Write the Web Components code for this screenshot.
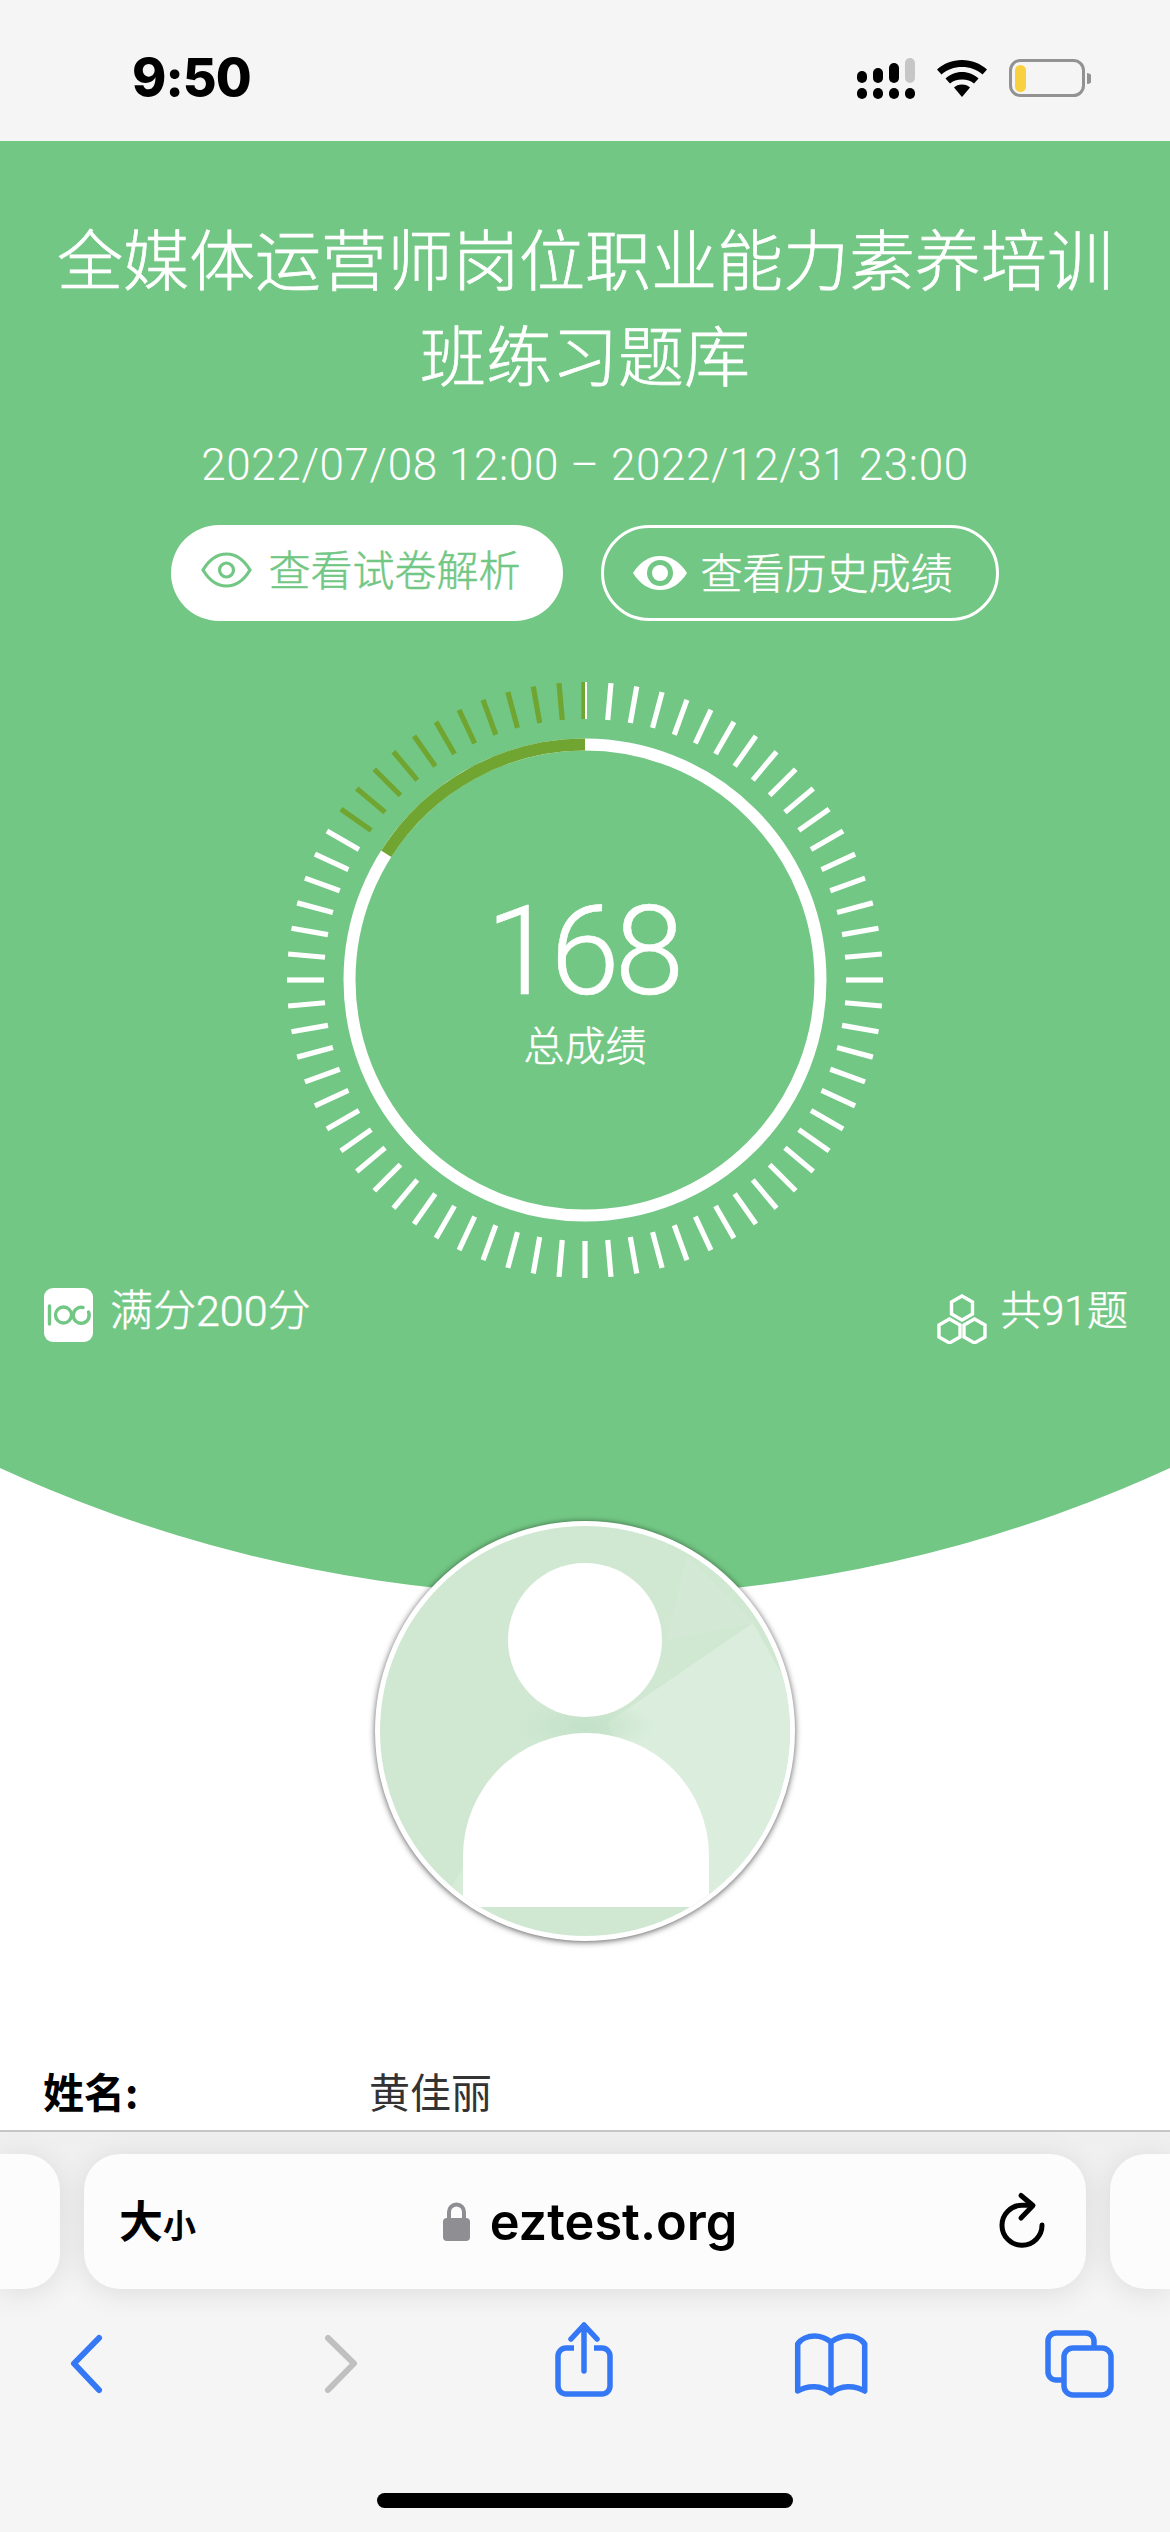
<!DOCTYPE html>
<html lang="zh">
<head>
<meta charset="utf-8">
<title>成绩</title>
<style>
  html, body { margin: 0; padding: 0; background: #fff; }
  body { font-family: "Noto Sans CJK SC", "Noto Sans", sans-serif; width: 1170px; height: 2532px; overflow: hidden; }
</style>
</head>
<body>
<exam-page>
  <status-bar time="9:50"></status-bar>
  <result-hero date="2022/07/08 12:00 – 2022/12/31 23:00">
    <span slot="title">全媒体运营师岗位职业能力素养培训班练习题库</span>
    <pill-button slot="actions" variant="solid">查看试卷解析</pill-button>
    <pill-button slot="actions" variant="outline">查看历史成绩</pill-button>
    <score-gauge slot="gauge" score="168" total="200" label="总成绩"></score-gauge>
    <stat-item slot="stats" icon="full">满分200分</stat-item>
    <stat-item slot="stats" icon="count">共91题</stat-item>
  </result-hero>
  <user-avatar></user-avatar>
  <info-list>
    <info-row label="姓名:">黄佳丽</info-row>
  </info-list>
  <safari-bar host-name="eztest.org"></safari-bar>
</exam-page>

<script>
class ExamPage extends HTMLElement {
  constructor() {
    super();
    this.attachShadow({ mode: 'open' });
  }
  connectedCallback() {
    this.shadowRoot.innerHTML = `
      <style>
        :host { display: flex; flex-direction: column; width: 1170px; height: 2532px; overflow: hidden; background: #fff; }
      </style>
      <slot></slot>`;
  }
}

class StatusBar extends HTMLElement {
  constructor() {
    super();
    this.attachShadow({ mode: 'open' });
  }
  connectedCallback() {
    this.shadowRoot.innerHTML = `
      <style>
        :host { display: flex; flex: none; box-sizing: border-box; height: 141px; padding: 36px 79px 21px 132px; align-items: center; background: #f5f5f5; }
        .time { font: 800 52px/84px Inter, "Liberation Sans", sans-serif; color: #000; letter-spacing: -1px; }
        .icons { display: flex; align-items: center; gap: 22px; margin-left: auto; }
        svg { display: block; }
      </style>
      <div class="time">${this.getAttribute('time')}</div>
      <div class="icons">
        <svg width="58" height="41" viewBox="0 0 58 41">
          <rect x="0" y="13" width="10" height="12" rx="5"/><rect x="16" y="10" width="10" height="15" rx="5"/>
          <rect x="32" y="5" width="10" height="20" rx="5"/><rect x="48" y="0" width="10" height="25" rx="5" fill="#c6c6c6"/>
          <rect x="0" y="30" width="10" height="11" rx="5"/><rect x="16" y="30" width="10" height="11" rx="5"/>
          <rect x="32" y="30" width="10" height="11" rx="5"/><rect x="48" y="30" width="10" height="11" rx="5"/>
        </svg>
        <svg width="50" height="37" viewBox="0 0 50 37">
          <path d="M25 0C15 0 7 3.5 0 9.5L4.5 14.5C10 9.5 17 7 25 7C33 7 40 9.5 45.5 14.5L50 9.5C43 3.5 35 0 25 0Z"/>
          <path d="M25 12C18.5 12 13 14.5 8.5 18.5L13 23.5C16 21 20 19.5 25 19.5C30 19.5 34 21 37 23.5L41.5 18.5C37 14.5 31.5 12 25 12Z"/>
          <path d="M25 24.5C21.5 24.5 19 25.5 17 27.5L25 37L33 27.5C31 25.5 28.5 24.5 25 24.5Z"/>
        </svg>
        <svg width="82" height="38" viewBox="0 0 82 38">
          <rect x="1.5" y="1.5" width="73" height="35" rx="10" fill="none" stroke="#929292" stroke-width="3"/>
          <rect x="6" y="6" width="11" height="27" rx="5.5" fill="#f9d040"/>
          <path d="M78 14a5.5 5.5 0 0 1 0 11Z" fill="#929292"/>
        </svg>
      </div>`;
  }
}

class ResultHero extends HTMLElement {
  constructor() {
    super();
    this.attachShadow({ mode: 'open' });
  }
  connectedCallback() {
    this.shadowRoot.innerHTML = `
      <style>
        :host { display: flex; flex: none; flex-direction: column; align-items: center; box-sizing: border-box; height: 1455px; padding-top: 67px; background: #73c784; color: #fff; clip-path: circle(1400px at 50% 55px); }
        .title { width: 1060px; font-size: 66px; line-height: 96px; font-weight: 300; -webkit-text-stroke: .7px #fff; text-align: center; }
        .date { margin-top: 35px; font: 300 44px/60px Roboto, "Liberation Sans", sans-serif; letter-spacing: .62px; white-space: nowrap; }
        .actions { display: flex; gap: 38px; margin-top: 30px; }
        .gauge { margin-top: 59px; }
        .stats { display: flex; justify-content: space-between; box-sizing: border-box; width: 100%; margin-top: 8px; padding: 0 42px 0 44px; }
      </style>
      <div class="title"><slot name="title"></slot></div>
      <div class="date">${this.getAttribute('date')}</div>
      <div class="actions"><slot name="actions"></slot></div>
      <div class="gauge"><slot name="gauge"></slot></div>
      <div class="stats"><slot name="stats"></slot></div>`;
  }
}

class PillButton extends HTMLElement {
  constructor() {
    super();
    this.attachShadow({ mode: 'open' });
  }
  connectedCallback() {
    const solid = this.getAttribute('variant') === 'solid';
    const icon = solid
      ? `<svg width="51" height="36" viewBox="0 0 51 36" fill="none" stroke="#73c784" stroke-width="3.2">
           <path d="M2 18C8 8 16 2 25.5 2S43 8 49 18C43 28 35 34 25.5 34S8 28 2 18Z"/>
           <circle cx="25.5" cy="18" r="7"/>
         </svg>`
      : `<svg width="54" height="34" viewBox="0 0 54 34">
           <path d="M0 17C7 6 16 0 27 0S47 6 54 17C47 28 38 34 27 34S7 28 0 17Z" fill="#fff"/>
           <circle cx="27" cy="17" r="13" fill="#73c784"/>
           <circle cx="27" cy="17" r="8" fill="#fff"/>
         </svg>`;
    this.shadowRoot.innerHTML = `
      <style>
        :host { display: flex; align-items: center; box-sizing: border-box; height: 96px; border-radius: 48px; font-size: 42px; line-height: 60px; font-weight: 300; white-space: nowrap; }
        :host([variant="solid"]) { padding: 0 42px 0 30px; gap: 16px; background: #fff; color: #73c784; -webkit-text-stroke: .5px #73c784; }
        :host([variant="outline"]) { padding: 0 43px 0 29px; gap: 14px; border: 3px solid #fff; color: #fff; -webkit-text-stroke: .5px #fff; }
        :host([variant="solid"]) .text { margin-top: -11px; }
        :host([variant="outline"]) .text { margin-top: -5px; }
        :host([variant="solid"]) svg { margin-top: -6px; }
        svg { display: block; flex: none; }
      </style>
      ${icon}<div class="text"><slot></slot></div>`;
  }
}

class ScoreGauge extends HTMLElement {
  constructor() {
    super();
    this.attachShadow({ mode: 'open' });
  }
  connectedCallback() {
    const score = Number(this.getAttribute('score'));
    const total = Number(this.getAttribute('total'));
    const lost = (total - score) / total * 360;
    const dark = '#6fa530';
    const rad = lost * Math.PI / 180;
    const r = 235.5;
    const endX = (-r * Math.sin(rad)).toFixed(1);
    const endY = (-r * Math.cos(rad)).toFixed(1);

    // 72 ticks, the ones inside the lost share run dark, counter-clockwise from the top
    let ticks = '';
    for (let i = 1; i < 72; i++) {
      const deg = i * 5;
      const isDark = deg > 360 - lost;
      ticks += `<rect x="-2.6" y="-298" width="5.2" height="37" fill="${isDark ? dark : '#fff'}" transform="rotate(${deg})"/>`;
    }

    this.shadowRoot.innerHTML = `
      <style>
        :host { display: block; position: relative; width: 600px; height: 600px; }
        svg { display: block; }
        .center { position: absolute; inset: 0; display: flex; flex-direction: column; align-items: center; justify-content: center; padding-top: 4px; box-sizing: border-box; color: #fff; }
        .score { font: 300 125px/110px Roboto, "Liberation Sans", sans-serif; letter-spacing: -5px; margin-left: -5px; -webkit-text-stroke: .6px #fff; }
        .label { margin-top: 11px; font-size: 41px; line-height: 50px; font-weight: 300; -webkit-text-stroke: .5px #fff; }
      </style>
      <svg width="600" height="600" viewBox="-300 -300 600 600">
        ${ticks}
        <rect x="-3.6" y="-298" width="3.6" height="37" fill="${dark}"/>
        <rect x="0" y="-298" width="2" height="37" fill="#fff"/>
        <circle r="${r}" fill="none" stroke="#fff" stroke-width="12"/>
        <path d="M0 ${-r}A${r} ${r} 0 0 0 ${endX} ${endY}" fill="none" stroke="${dark}" stroke-width="12"/>
      </svg>
      <div class="center">
        <div class="score">${score}</div>
        <div class="label">${this.getAttribute('label')}</div>
      </div>`;
  }
}

class StatItem extends HTMLElement {
  constructor() {
    super();
    this.attachShadow({ mode: 'open' });
  }
  connectedCallback() {
    const hex = (x, y) => `<path d="M${x} ${y - 12}L${x + 10.5} ${y - 6}V${y + 6}L${x} ${y + 12}L${x - 10.5} ${y + 6}V${y - 6}Z"/>`;
    const icon = this.getAttribute('icon') === 'full'
      ? `<svg width="49" height="54" viewBox="0 0 49 54">
           <rect width="49" height="54" rx="9" fill="#fff"/>
           <g fill="none" stroke="#73c784" stroke-width="3.4" stroke-linecap="round">
             <path d="M5.5 18V36"/><circle cx="19.5" cy="27" r="8"/>
             <path d="M44.500 24A8 8 0 1 1 39 19.500"/>
           </g>
         </svg>`
      : `<svg class="hex" width="50" height="50" viewBox="0 0 50 50" fill="none" stroke="#fff" stroke-width="3.4">
           ${hex(25, 14)}${hex(12.5, 37)}${hex(37.5, 37)}
         </svg>`;
    this.shadowRoot.innerHTML = `
      <style>
        :host { display: flex; align-items: flex-start; gap: 17px; font-size: 41px; line-height: 46px; font-weight: 300; white-space: nowrap; font-family: Roboto, "Noto Sans CJK SC", sans-serif; -webkit-text-stroke: .5px #fff; }
        :host([icon="full"]) { font-size: 43px; }
        :host([icon="count"]) { gap: 14px; }
        svg { display: block; flex: none; }
        .hex { margin-top: 6px; }
      </style>
      ${icon}<slot></slot>`;
  }
}

class UserAvatar extends HTMLElement {
  constructor() {
    super();
    this.attachShadow({ mode: 'open' });
  }
  connectedCallback() {
    this.shadowRoot.innerHTML = `
      <style>
        :host { display: block; flex: none; position: relative; z-index: 1; box-sizing: border-box; width: 420px; height: 420px; margin: -75px auto 0; border: 5px solid #fff; border-radius: 50%; overflow: hidden; background: #fff; box-shadow: 0 1px 6px rgba(0,0,0,.65); }
        svg { display: block; }
      </style>
      <svg width="410" height="410" viewBox="0 0 410 410">
        <defs>
          <radialGradient id="dim" cx="50%" cy="50%" r="50%">
            <stop offset="0" stop-color="#c3e1c8"/><stop offset="1" stop-color="#c3e1c8" stop-opacity="0"/>
          </radialGradient>
        </defs>
        <rect width="410" height="410" fill="#d0e8d2"/>
        <path d="M287 114L307 30L375 97Z" fill="#d3e9d5"/>
        <path d="M227 197L373 97L430 200V420H330Z" fill="#dbeedd"/>
        <path d="M60 380L115 290L100 410H50Z" fill="#d6ebd8"/>
        <ellipse cx="205" cy="200" rx="70" ry="28" fill="url(#dim)"/>
        <circle cx="205" cy="114" r="77" fill="#fff"/>
        <path d="M83 381V330A123 123 0 0 1 329 330V381Z" fill="#fff"/>
      </svg>`;
  }
}

class InfoList extends HTMLElement {
  constructor() {
    super();
    this.attachShadow({ mode: 'open' });
  }
  connectedCallback() {
    this.shadowRoot.innerHTML = `
      <style>
        :host { display: block; flex: 1; min-height: 0; overflow: hidden; box-sizing: border-box; padding: 119px 43px 0; }
      </style>
      <slot></slot>`;
  }
}

class InfoRow extends HTMLElement {
  constructor() {
    super();
    this.attachShadow({ mode: 'open' });
  }
  connectedCallback() {
    this.shadowRoot.innerHTML = `
      <style>
        :host { display: grid; grid-template-columns: 326px 1fr; font-size: 41px; line-height: 60px; color: #333; }
        .label { font-weight: 700; color: #000; }
      </style>
      <div class="label">${this.getAttribute('label')}</div>
      <div><slot></slot></div>`;
  }
}

class SafariBar extends HTMLElement {
  constructor() {
    super();
    this.attachShadow({ mode: 'open' });
  }
  connectedCallback() {
    this.shadowRoot.innerHTML = `
      <style>
        :host { display: block; flex: none; box-sizing: border-box; height: 402px; border-top: 2px solid #c6c6c6; padding-top: 22px; background: linear-gradient(#efefef, #f5f5f5 40%); }
        .cards { display: grid; grid-template-columns: 60px 1002px 60px; gap: 24px; height: 135px; }
        .side { background: #fcfcfc; box-shadow: 0 4px 30px rgba(0,0,0,.1); }
        .side.left { border-radius: 0 36px 36px 0; }
        .side.right { border-radius: 36px 0 0 36px; }
        .address { display: grid; grid-template-columns: 1fr auto 1fr; align-items: center; padding: 0 34px 0 35px; border-radius: 36px; background: #fcfcfc; box-shadow: 0 4px 30px rgba(0,0,0,.1); }
        .size { font-weight: 700; color: #000; white-space: nowrap; font-size: 44px; line-height: 60px; }
        .size small { font-size: 33px; }
        .host { display: flex; align-items: center; gap: 20px; margin-left: 9px; font: 560 50.5px/60px Inter, "Liberation Sans", sans-serif; color: #000; }
        .reload { justify-self: end; }
        svg { display: block; }
        .tools { display: grid; grid-template-columns: 172px 338px 148px 346px 150px; justify-items: center; margin-top: 26px; }
        .tools svg { fill: none; stroke: #3478f6; stroke-linecap: round; stroke-linejoin: round; }
        .indicator { width: 416px; height: 15px; margin: 88px auto 0; border-radius: 8px; background: #000; }
      </style>
      <div class="cards">
        <div class="side left"></div>
        <div class="address">
          <div class="size">大<small>小</small></div>
          <div class="host">
            <svg width="27" height="39" viewBox="0 0 27 39">
              <path d="M6 18V10a7.500 7.500 0 0 1 15 0V18" fill="none" stroke="#8e8e93" stroke-width="4"/>
              <rect y="16" width="27" height="23" rx="4" fill="#8e8e93"/>
            </svg>
            <span>${this.getAttribute('host-name')}</span>
          </div>
          <svg class="reload" width="60" height="70" viewBox="0 0 60 70" fill="none" stroke="#000" stroke-width="5" stroke-linecap="round" stroke-linejoin="round">
            <path d="M50 38A20 20 0 1 1 30 18.300H38"/>
            <path d="M29 8.500L41 18.500L29 31"/>
          </svg>
        </div>
        <div class="side right"></div>
      </div>
      <div class="tools">
        <svg width="40" height="90" viewBox="0 -15 40 90" stroke-width="6"><path d="M33 8L8 33.500L33 60"/></svg>
        <svg width="40" height="90" viewBox="0 -15 40 90" stroke-width="6" style="stroke:#c0c0c0"><path d="M7 8L33 33.500L7 60"/></svg>
        <svg width="70" height="90" viewBox="0 -5 70 90" stroke-width="5.500">
          <path d="M35 6V51M22 19L35 5L48 19"/>
          <path d="M25 28H17A8 8 0 0 0 9 36V66A8 8 0 0 0 17 74H53A8 8 0 0 0 61 66V36A8 8 0 0 0 53 28H45" stroke-linecap="butt"/>
        </svg>
        <svg width="84" height="90" viewBox="-0.700 -15 84 90" stroke-width="5.500">
          <path d="M41.300 12C36 8 31 6 25 6C18 6 11 9 8 14V61C18 55 32 55 41.300 63C51 55 65 55 75 61V14C72 9 65 6 58 6C52 6 47 8 41.300 12V60"/>
        </svg>
        <svg width="84" height="90" viewBox="-3 -10 84 90" stroke-width="5.500">
          <path d="M54 20V16A8 8 0 0 0 46 8H16A8 8 0 0 0 8 16V47A8 8 0 0 0 16 55H23"/>
          <rect x="24" y="23" width="47" height="47" rx="9"/>
        </svg>
      </div>
      <div class="indicator"></div>`;
  }
}

customElements.define('exam-page', ExamPage);
customElements.define('status-bar', StatusBar);
customElements.define('result-hero', ResultHero);
customElements.define('pill-button', PillButton);
customElements.define('score-gauge', ScoreGauge);
customElements.define('stat-item', StatItem);
customElements.define('user-avatar', UserAvatar);
customElements.define('info-list', InfoList);
customElements.define('info-row', InfoRow);
customElements.define('safari-bar', SafariBar);
</script>
</body>
</html>
